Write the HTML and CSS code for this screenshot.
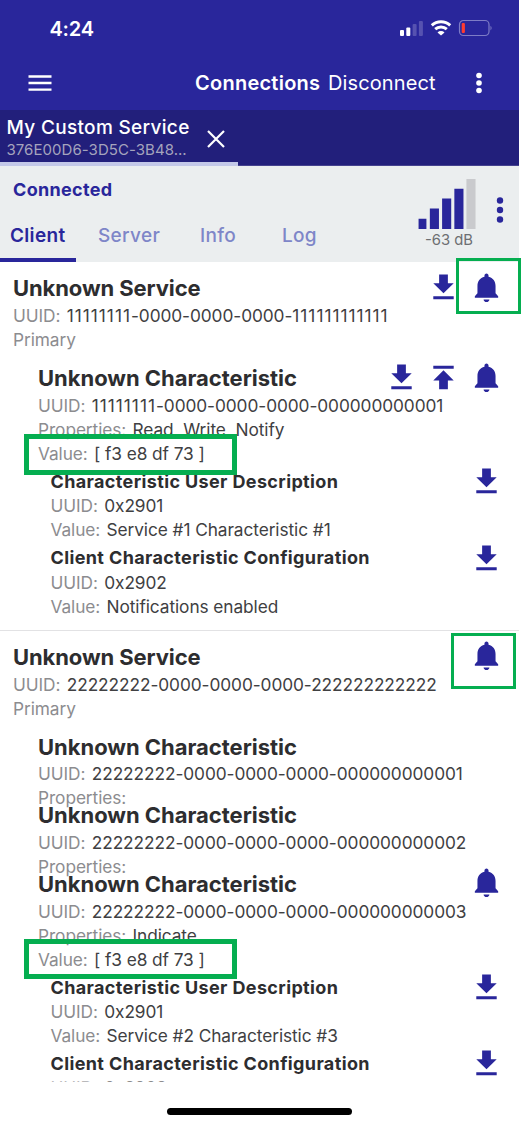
FILE: index.html
```html
<!DOCTYPE html>
<html lang="en">
<head>
<meta charset="utf-8">
<title>Connections</title>
<link rel="stylesheet" href="styles.css">
</head>
<body>
<svg class="defs" aria-hidden="true">
  <symbol id="download" viewBox="0 0 24 24"><path d="M19 9h-4V3H9v6H5l7 7 7-7zM5 18v2h14v-2H5z"/></symbol>
  <symbol id="upload" viewBox="0 0 24 24"><path d="M5 4v2h14V4H5zm0 10h4v6h6v-6h4l-7-7-7 7z"/></symbol>
  <symbol id="bell" viewBox="0 0 24 24"><path d="M12 22c1.100 0 2-.9 2-1.800h-4c0 .9.9 1.800 2 1.800zm6.200-6v-5c0-3.070-1.700-5.640-4.800-6.320V3.900c0-.83-.6-1.500-1.400-1.500s-1.400.67-1.400 1.500v.78C7.500 5.360 5.800 7.920 5.800 11v5L4 18v1h16v-1L18.200 16z"/></symbol>
</svg>
<div class="app">
  <header class="top">
    <div class="status">
      <span class="time">4:24</span>
      <svg class="status-icons" viewBox="0 0 94 18">
        <g fill="#fff"><rect x="0" y="11" width="4" height="6" rx="1"/><rect x="6.300" y="8.500" width="4" height="8.500" rx="1"/></g>
        <g fill="#5652b0"><rect x="12.600" y="5" width="4" height="12" rx="1"/><rect x="18.900" y="2" width="4" height="15" rx="1"/></g>
        <g fill="none" stroke="#fff" stroke-width="3"><path d="M31.800 6.400a13.500 13.500 0 0 1 18.400 0"/><path d="M35.200 10.200a8.500 8.500 0 0 1 11.600 0"/></g>
        <path d="M37.500 13.400a5 5 0 0 1 7 0L41 16.500z" fill="#fff"/>
        <rect x="59.500" y="1.500" width="29.500" height="15" rx="4" fill="none" stroke="#7e7cc6" stroke-width="1.200"/>
        <path d="M90.500 6.800q2.200 2.200 0 4.600z" fill="#7e7cc6"/>
        <rect x="61.700" y="4" width="3.200" height="10" rx="1" fill="#ff3b30"/>
      </svg>
    </div>
    <div class="nav">
      <svg class="menu" viewBox="0 0 24 16"><path d="M0.500 1.500h23M0.500 8h23M0.500 14.700h23" stroke="#fff" stroke-width="2.300"/></svg>
      <span class="nav-title">Connections</span>
      <span class="nav-action">Disconnect</span>
      <svg class="dots light" viewBox="0 0 8 22"><circle cx="4" cy="3.500" r="2.800"/><circle cx="4" cy="11" r="2.800"/><circle cx="4" cy="18.500" r="2.800"/></svg>
    </div>
  </header>
  <div class="device-bar">
    <div class="device">
      <div class="device-text">
        <div class="device-name">My Custom Service</div>
        <div class="device-id">376E00D6-3D5C-3B48...</div>
      </div>
      <svg class="close" viewBox="0 0 18 18"><path d="M1 1l16 16M17 1L1 17" stroke="#fff" stroke-width="2.200"/></svg>
    </div>
  </div>
  <section class="panel">
    <div class="panel-left">
      <div class="state">Connected</div>
      <nav class="tabs">
        <span class="tab active">Client</span>
        <span class="tab t-server">Server</span>
        <span class="tab t-info">Info</span>
        <span class="tab t-log">Log</span>
      </nav>
    </div>
    <div class="signal">
      <svg class="bars" viewBox="0 0 58 51"><path d="M0 40.500h8V51H0zM11.500 30h9.300v21h-9.300zM24 20h9.300v31H24zM36.500 10h9.300v41h-9.300z" fill="#29269b"/><path d="M48.800 0h9.300v51h-9.300z" fill="#c9cacd"/></svg>
      <div class="db">-63 dB</div>
    </div>
    <svg class="dots dark" viewBox="0 0 8 26"><circle cx="4" cy="3.500" r="3.200"/><circle cx="4" cy="13" r="3.200"/><circle cx="4" cy="22.500" r="3.200"/></svg>
  </section>
  <main class="list">
    <section class="service">
      <div class="head"><h2>Unknown Service</h2><div class="icons"><svg><use href="#download"/></svg><svg><use href="#bell"/></svg></div></div>
      <p><span class="k">UUID:</span><span class="v"><span class="ones">11111111</span>-0000-0000-0000-<span class="ones">111111111111</span></span></p>
      <p><span class="k">Primary</span></p>
      <div class="chars">
        <div class="head"><h3>Unknown Characteristic</h3><div class="icons"><svg><use href="#download"/></svg><svg><use href="#upload"/></svg><svg><use href="#bell"/></svg></div></div>
        <p><span class="k">UUID:</span><span class="v"><span class="ones">11111111</span>-0000-0000-0000-000000000001</span></p>
        <p><span class="k">Properties:</span><span class="v">Read, Write, Notify</span></p>
        <p><span class="k">Value:</span><span class="v">[ f3 e8 df 73 ]</span></p>
        <div class="descs">
          <div class="head desc"><h4>Characteristic User Description</h4><div class="icons"><svg><use href="#download"/></svg></div></div>
          <p><span class="k">UUID:</span><span class="v">0x2901</span></p>
          <p><span class="k">Value:</span><span class="v">Service #1 Characteristic #1</span></p>
          <div class="head desc"><h4>Client Characteristic Configuration</h4><div class="icons"><svg><use href="#download"/></svg></div></div>
          <p><span class="k">UUID:</span><span class="v">0x2902</span></p>
          <p><span class="k">Value:</span><span class="v">Notifications enabled</span></p>
        </div>
      </div>
    </section>
    <section class="service">
      <div class="head"><h2>Unknown Service</h2><div class="icons"><svg><use href="#bell"/></svg></div></div>
      <p><span class="k">UUID:</span><span class="v">22222222-0000-0000-0000-222222222222</span></p>
      <p><span class="k">Primary</span></p>
      <div class="chars">
        <div class="head"><h3>Unknown Characteristic</h3></div>
        <p><span class="k">UUID:</span><span class="v">22222222-0000-0000-0000-000000000001</span></p>
        <p><span class="k">Properties:</span></p>
        <div class="head"><h3>Unknown Characteristic</h3></div>
        <p><span class="k">UUID:</span><span class="v">22222222-0000-0000-0000-000000000002</span></p>
        <p><span class="k">Properties:</span></p>
        <div class="head"><h3>Unknown Characteristic</h3><div class="icons"><svg><use href="#bell"/></svg></div></div>
        <p><span class="k">UUID:</span><span class="v">22222222-0000-0000-0000-000000000003</span></p>
        <p><span class="k">Properties:</span><span class="v">Indicate</span></p>
        <p><span class="k">Value:</span><span class="v">[ f3 e8 df 73 ]</span></p>
        <div class="descs">
          <div class="head desc"><h4>Characteristic User Description</h4><div class="icons"><svg><use href="#download"/></svg></div></div>
          <p><span class="k">UUID:</span><span class="v">0x2901</span></p>
          <p><span class="k">Value:</span><span class="v">Service #2 Characteristic #3</span></p>
          <div class="head desc"><h4>Client Characteristic Configuration</h4><div class="icons"><svg><use href="#download"/></svg></div></div>
          <p class="fading"><span class="k">UUID:</span><span class="v">0x2902</span></p>
        </div>
      </div>
    </section>
  </main>
  <footer class="home"><div class="home-bar"></div></footer>
</div>
<div class="mark mark-bell-1"></div>
<div class="mark thick mark-value-1"></div>
<div class="mark mark-bell-2"></div>
<div class="mark thick mark-value-2"></div>
</body>
</html>
```

FILE: styles.css
```css
* { box-sizing: border-box; }
body { margin: 0; position: relative; width: 521px; height: 1125px; overflow: hidden; background: #fff; font-family: Inter, sans-serif; color: #404042; }
.defs { display: none; }
svg { display: block; flex: none; }
h2, h3, h4, p { margin: 0; white-space: nowrap; }
.app { width: 519px; height: 1125px; display: flex; flex-direction: column; }

.top { height: 110px; flex: none; background: #29269b; color: #fff; }
.status { height: 56px; padding: 0 25.500px 0 49.500px; display: flex; align-items: center; justify-content: space-between; }
.time { font-size: 20px; line-height: 26px; padding-top: 1px; font-weight: 600; letter-spacing: -0.200px; }
.status-icons { width: 94px; height: 18px; }
.nav { height: 54px; padding-left: 28px; display: flex; align-items: center; white-space: nowrap; }
.menu { width: 24px; height: 16px; }
.nav-title { margin-left: 143px; width: 133px; font-size: 20px; font-weight: 600; letter-spacing: 0.250px; }
.nav-action { width: 146.500px; font-size: 20px; letter-spacing: 0.120px; }
.dots.light { width: 8px; height: 22px; fill: #fff; }

.device-bar { height: 56px; flex: none; background: #221f7b; border-bottom: 1px solid #45428f; }
.device { width: 238px; height: 56px; padding: 4px 0 0 6.500px; display: flex; border-bottom: 4px solid #c3c8e8; }
.device-text { width: 200.500px; white-space: nowrap; }
.device-name { font-size: 19px; line-height: 27px; font-weight: 500; letter-spacing: 0.320px; color: #fff; }
.device-id { font-size: 15px; line-height: 18px; letter-spacing: 0.050px; color: #a5a4bd; }
.close { width: 18px; height: 18px; margin-top: 16px; }

.panel { height: 96px; flex: none; background: #ebeeef; display: flex; }
.panel-left { width: 418px; display: flex; flex-direction: column; justify-content: space-between; }
.state { padding: 12px 0 0 13px; font-size: 18px; line-height: 24px; font-weight: 700; letter-spacing: 0.320px; color: #29269b; }
.tabs { height: 54px; display: flex; font-size: 19px; line-height: 55px; font-weight: 500; letter-spacing: 0.320px; color: #7e86c8; }
.tab.active { width: 76px; padding-left: 10px; color: #29269b; border-bottom: 4px solid #29269b; font-weight: 600; }
.t-server { width: 102px; margin-left: 22px; }
.t-info { width: 82px; }
.signal { width: 60px; padding-top: 13px; }
.bars { width: 58px; height: 50px; }
.db { padding-left: 7px; font-size: 14.800px; line-height: 23px; white-space: nowrap; color: #6d6f72; }
.dots.dark { width: 8px; height: 26px; margin: 30.500px 0 0 18px; fill: #29269b; }

.list { height: 820px; flex: none; overflow: hidden; }
.service { padding: 20px 0 12px 13px; border-bottom: 1px solid #e2e2e4; }
.head { height: 12px; margin-bottom: 9px; padding-right: 15px; display: flex; align-items: center; justify-content: space-between; color: #2d2d2f; }
h2, h3 { font-size: 22px; font-weight: 700; line-height: 28px; letter-spacing: -0.100px; }
h3 { letter-spacing: -0.030px; }
h4 { font-size: 18px; font-weight: 700; line-height: 24px; letter-spacing: 0.370px; }
.icons { display: flex; gap: 7.700px; margin-top: -2px; color: #29269b; }
.desc .icons { margin-top: 0; }
.icons svg { width: 35px; height: 35px; fill: currentColor; }
p { height: 24px; font-size: 17.300px; line-height: 25.200px; letter-spacing: -0.080px; display: flex; }
.k { color: #8c8c8f; margin-right: 6.300px; }
.ones { letter-spacing: 1px; }
.chars { margin-top: 21px; padding-left: 25px; }
.chars .head { margin-bottom: 8.700px; }
.descs { padding-left: 12.500px; }
.chars .head.desc { height: 24px; margin: 5px 0 -0.600px; }
.fading { opacity: 0.6; }

.home { flex: 1; padding-top: 26px; display: flex; justify-content: center; }
.home-bar { width: 185px; height: 7px; border-radius: 4px; background: #000; }

/* callout frames drawn over the list */
.mark { position: absolute; width: 65px; height: 56px; border: 3px solid #05ae50; }
.mark.thick { left: 24px; width: 213px; height: 41px; border-width: 5px; }
.mark-bell-1 { left: 456px; top: 258px; }
.mark-bell-2 { left: 451px; top: 633px; }
.mark-value-1 { top: 434px; }
.mark.mark-value-2 { top: 939px; height: 40px; }
```
